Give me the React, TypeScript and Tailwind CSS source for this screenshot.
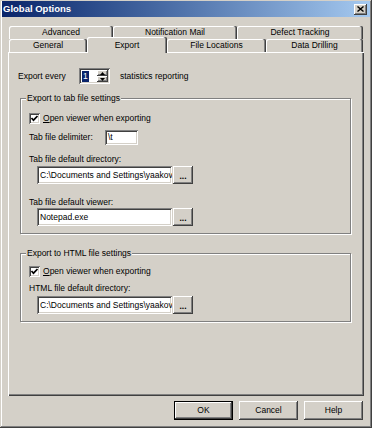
const raised =
  'shadow-[inset_-1px_-1px_#404040,inset_1px_1px_#ffffff,inset_-2px_-2px_#808080,inset_2px_2px_#d4d0c8]';
const sunken =
  'shadow-[inset_1px_1px_#808080,inset_-1px_-1px_#ffffff,inset_2px_2px_#404040,inset_-2px_-2px_#d4d0c8]';
const tabEdge =
  'shadow-[inset_-1px_0_#404040,inset_-2px_0_#808080,inset_1px_1px_#ffffff]';

function Tab({ label, width, selected }: { label: string; width: string; selected?: boolean }) {
  if (selected) {
    return (
      <div
        className={`relative z-10 -mt-[2px] flex h-[16px] items-start justify-center rounded-t-[2px] bg-[#d4d0c8] pt-[2px] ${width} ${tabEdge}`}
      >
        {label}
      </div>
    );
  }
  return (
    <div className={`flex h-[13px] items-center justify-center rounded-t-[2px] ${width} ${tabEdge}`}>
      {label}
    </div>
  );
}

function Checkbox() {
  return (
    <div className="flex h-[12px] items-center gap-[3px]">
      <div className={`flex h-[11px] w-[11px] items-center justify-center bg-white ${sunken}`}>
        <svg width="11" height="11" viewBox="0 0 11 11">
          <polyline points="2.5,5 4.5,7.2 8.5,3" fill="none" stroke="#000" strokeWidth="1.7" />
        </svg>
      </div>
      <span>
        <span className="underline">O</span>pen viewer when exporting
      </span>
    </div>
  );
}

function PathField({ value }: { value: string }) {
  return (
    <div className="ml-[8px] flex h-[18px]">
      <div className={`flex w-[135px] items-center overflow-hidden whitespace-nowrap bg-white pl-[3px] ${sunken}`}>
        {value}
      </div>
      <div className={`ml-[1px] flex w-[20px] items-center justify-center pt-[2px] font-bold ${raised}`}>...</div>
    </div>
  );
}

function Group({ title, children }: { title: string; children: React.ReactNode }) {
  return (
    <fieldset className="ml-[12px] mr-[13px] border border-[#808080] shadow-[inset_1px_1px_#ffffff,1px_1px_#ffffff]">
      <legend className="ml-[5px] bg-[#d4d0c8] px-[1px] leading-[12px]">{title}</legend>
      <div className="pb-[7px] pl-[8px]">{children}</div>
    </fieldset>
  );
}

function Button({ label, primary }: { label: string; primary?: boolean }) {
  const edge = primary
    ? 'shadow-[inset_0_0_0_1px_#000000,inset_-2px_-2px_#404040,inset_2px_2px_#ffffff,inset_-3px_-3px_#808080]'
    : raised;
  return <div className={`flex h-[19px] w-[59px] items-center justify-center ${edge}`}>{label}</div>;
}

export default function App() {
  return (
    <div className="h-[428px] w-[372px] overflow-hidden bg-[#d4d0c8] pt-[1px] font-['Liberation_Sans',Arial,sans-serif] text-[8.5px] text-black shadow-[inset_-1px_-1px_#404040,inset_1px_1px_#d4d0c8,inset_-2px_-2px_#808080,inset_2px_2px_#ffffff]">
      <div className="mx-[2px] flex h-[16px] items-center justify-between bg-linear-to-r from-[#0a246a] to-[#a6caf0] pl-[1px] pr-[3px]">
        <span className="text-[9.5px] font-bold text-white">Global Options</span>
        <div className={`flex h-[11px] w-[13px] items-center justify-center bg-[#d4d0c8] ${raised}`}>
          <svg width="7" height="6" viewBox="0 0 7 6">
            <path d="M0.5 0.5 L6.5 5.5 M6.5 0.5 L0.5 5.5" stroke="#000" strokeWidth="1.4" />
          </svg>
        </div>
      </div>

      <div className="px-[8px] pt-[9px]">
        <div className="flex pl-[1px]">
          <Tab label="Advanced" width="w-[104px]" />
          <Tab label="Notification Mail" width="w-[124px]" />
          <Tab label="Defect Tracking" width="w-[126px]" />
        </div>
        <div className="flex h-[13px] pl-[1px]">
          <Tab label="General" width="w-[78px]" />
          <Tab label="Export" width="w-[80px]" selected />
          <Tab label="File Locations" width="w-[99px]" />
          <Tab label="Data Drilling" width="w-[97px]" />
        </div>

        <div className="flow-root h-[344px] w-[356px] pt-[16px] shadow-[inset_1px_1px_#ffffff,inset_-1px_-1px_#404040,inset_-2px_-2px_#808080]">
          <div className="flex h-[16px] items-center pl-[10px]">
            <span className="w-[61px]">Export every</span>
            <div className={`flex h-[16px] w-[31px] bg-white p-[2px] ${sunken}`}>
              <div className="flex flex-1 items-center pl-[1px]">
                <span className="bg-[#0a246a] px-[1px] leading-[11px] text-white">1</span>
              </div>
              <div className="flex w-[11px] flex-col">
                <div className={`flex flex-1 items-center justify-center bg-[#d4d0c8] ${raised}`}>
                  <svg width="5" height="3" viewBox="0 0 5 3">
                    <path d="M2.5 0 L5 3 L0 3 Z" fill="#000" />
                  </svg>
                </div>
                <div className={`flex flex-1 items-center justify-center bg-[#d4d0c8] ${raised}`}>
                  <svg width="5" height="3" viewBox="0 0 5 3">
                    <path d="M0 0 L5 0 L2.5 3 Z" fill="#000" />
                  </svg>
                </div>
              </div>
            </div>
            <span className="ml-[10px]">statistics reporting</span>
          </div>

          <div className="mt-[8px]">
            <Group title="Export to tab file settings">
              <div className="mt-[8px]">
                <Checkbox />
              </div>
              <div className="mt-[6px] flex h-[15px] items-center">
                <span className="w-[76px]">Tab file delimiter:</span>
                <div className={`flex h-[15px] w-[33px] items-center bg-white pl-[3px] ${sunken}`}>\t</div>
              </div>
              <div className="mt-[8px] leading-[12px]">Tab file default directory:</div>
              <div className="mt-[1px]">
                <PathField value="C:\Documents and Settings\yaakov" />
              </div>
              <div className="mt-[12px] leading-[12px]">Tab file default viewer:</div>
              <PathField value="Notepad.exe" />
            </Group>
          </div>

          <div className="mt-[13px]">
            <Group title="Export to HTML file settings">
              <div className="mt-[6px]">
                <Checkbox />
              </div>
              <div className="mt-[5px] leading-[12px]">HTML file default directory:</div>
              <div className="mt-[2px]">
                <PathField value="C:\Documents and Settings\yaakov" />
              </div>
            </Group>
          </div>
        </div>

        <div className="mt-[5px] flex justify-end gap-[6px] pr-[1px]">
          <Button label="OK" primary />
          <Button label="Cancel" />
          <Button label="Help" />
        </div>
      </div>
    </div>
  );
}
